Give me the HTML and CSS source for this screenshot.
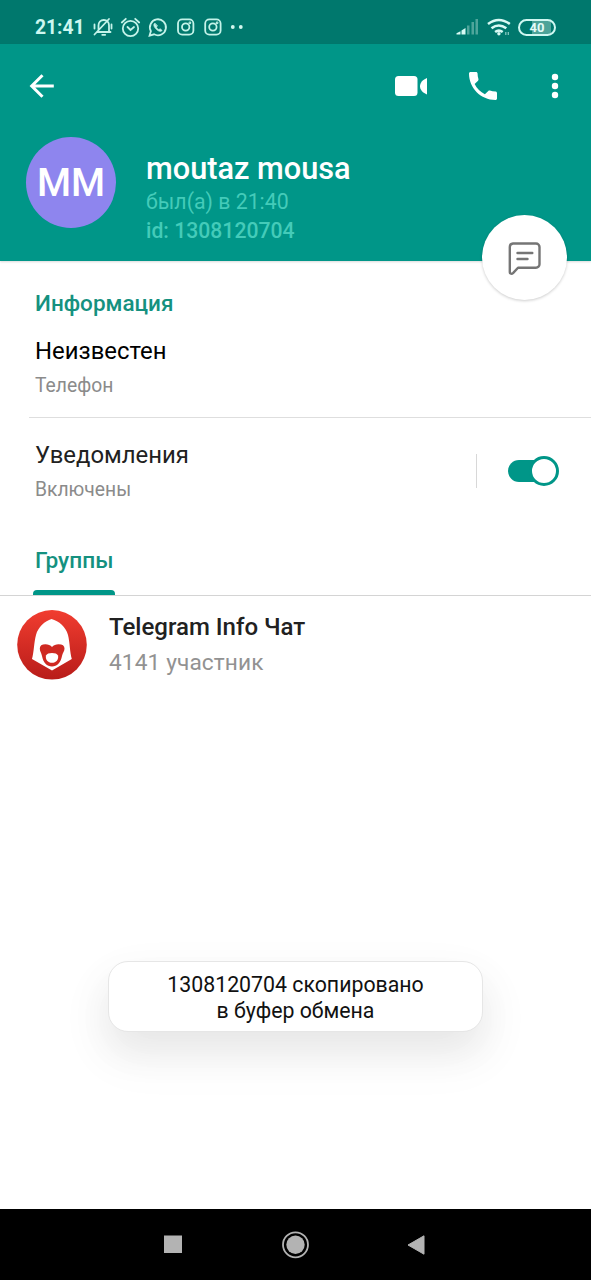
FILE: index.html
```html
<!DOCTYPE html>
<html lang="ru">
<head>
<meta charset="utf-8">
<title>moutaz mousa</title>
<link rel="stylesheet" href="styles.css">
</head>
<body>
<div class="screen">
  <div class="statusbar">
    <span class="clock">21:41</span>
    <svg class="status-icons" width="152" height="24" viewBox="92 15 152 24" fill="none" stroke="#c4f3e9" stroke-width="1.8" stroke-linecap="round">
      <path d="M97 32h13.500M98.500 31.500v-6c0-3 2-5.500 5.300-5.500s5.200 2.500 5.200 5.500v6M102.200 34.800h3M94.500 24.500v4M111.500 24.500v4M94.500 34.500l14.500-15.500"/>
      <circle cx="130.500" cy="28.500" r="7.700"/><path d="M127.500 27l3 3 3.500-3M121.800 22.500l4-3.700M139.200 22.500l-4-3.700"/>
      <path d="M149.600 35.600l1.300-4.500a8 8 0 1 1 3.200 3.200z"/>
      <path d="M154.600 23.300c-1.500 1.200-.8 3.400 1.600 5.800s4.700 3 5.900 1.300l-2-1.600-1.200.9c-1.200-.5-2-1.300-2.500-2.500l.8-1.200z" fill="#c4f3e9" stroke-width="0.800"/>
      <rect x="178" y="19.300" width="15.400" height="15.400" rx="4.200"/><circle cx="185.700" cy="27" r="3.700"/><circle cx="189.900" cy="22.800" r=".5"/>
      <rect x="205.200" y="19.300" width="15.400" height="15.400" rx="4.200"/><circle cx="212.900" cy="27" r="3.700"/><circle cx="217.100" cy="22.800" r=".5"/>
      <g fill="#d3f7ef" stroke="none"><circle cx="232.800" cy="27" r="1.900"/><circle cx="240.800" cy="27" r="1.900"/></g>
    </svg>
    <svg class="signal-icons" width="56" height="22" viewBox="454.500 16 56 22">
      <g fill="#d8faf4"><path d="M456 34.500v-1.200l4-2v3.200zM461 34.500v-4l4-2.500v6.500z"/></g>
      <g fill="#4fa59b"><rect x="466.500" y="25.500" width="2.500" height="9"/><rect x="471" y="22" width="2.500" height="12.500"/><rect x="475" y="19" width="2.500" height="15.500"/></g>
      <g fill="none" stroke="#d8faf4" stroke-width="2.600"><path d="M487.500 24q10.800-8 21.800 0M491 28.300q7.300-5.600 14.800 0M494.600 32q3.700-2.800 7.600 0"/></g>
      <circle cx="498.400" cy="33.700" r="1.700" fill="#d8faf4"/><path d="M505.300 32v3M507.800 32v3" stroke="#8accc2" stroke-width="1.200"/>
    </svg>
    <span class="battery"><span class="battery-value">40</span></span>
  </div>

  <header class="header">
    <div class="toolbar">
      <svg class="back" width="26" height="26" viewBox="0 0 26 26" fill="none" stroke="#fff" stroke-width="3"><path d="M25.800 13H3.500M14.500 2.200L3.700 13l10.800 10.800"/></svg>
      <svg class="video" width="34" height="22" viewBox="0 0 34 22" fill="#fff"><rect x="1" y="1" width="22.500" height="20" rx="3.500"/><path d="M33 3v16.500c-4-1.500-7-4.500-7-8.200S29 4.500 33 3z"/></svg>
      <svg class="phone" width="28" height="28" viewBox="3 3 18 18" fill="#fff"><path d="M6.620 10.790c1.440 2.830 3.760 5.140 6.590 6.590l2.200-2.200c.27-.27.670-.36 1.020-.24 1.120.37 2.330.57 3.570.57.550 0 1 .45 1 1V20c0 .55-.45 1-1 1-9.390 0-17-7.610-17-17 0-.55.450-1 1-1h3.500c.55 0 1 .45 1 1 0 1.250.2 2.450.57 3.570.11.350.03.740-.25 1.020l-2.200 2.200z"/></svg>
      <svg class="more" width="8" height="26" viewBox="0 0 8 26" fill="#fff"><circle cx="4" cy="4" r="3.200"/><circle cx="4" cy="13" r="3.200"/><circle cx="4" cy="22" r="3.200"/></svg>
    </div>
    <div class="profile">
      <div class="avatar">MM</div>
      <div class="profile-text">
        <div class="name">moutaz mousa</div>
        <div class="seen">был(а) в 21:40</div>
        <div class="user-id">id: 1308120704</div>
      </div>
    </div>
    <div class="fab">
      <svg width="34" height="34" viewBox="0 0 34 34" fill="none" stroke="#757575" stroke-width="2.400" stroke-linejoin="round" stroke-linecap="round"><path d="M5 2.500h23a3.500 3.500 0 0 1 3.500 3.500v17.200a3.500 3.500 0 0 1-3.500 3.500H10l-5 5.400c-1.200 1.100-3.200.8-3.200-.9V6A3.500 3.500 0 0 1 5 2.500z"/><path d="M9.500 12h14.800M9.500 18h10"/></svg>
    </div>
  </header>

  <main class="content">
    <section class="info">
      <h2 class="section-title">Информация</h2>
      <div class="value phone-value">Неизвестен</div>
      <div class="label phone-label">Телефон</div>
    </section>
    <section class="notifications">
      <div>
        <div class="value notify-value">Уведомления</div>
        <div class="label notify-label">Включены</div>
      </div>
      <div class="switch-area"><span class="switch"><span class="thumb"></span></span></div>
    </section>
    <nav class="tabs"><span class="tab">Группы</span></nav>
    <div class="chat">
      <svg class="chat-avatar" width="70" height="70" viewBox="0 0 70 70">
        <defs><linearGradient id="red" x1="0" y1="0" x2="0" y2="1"><stop offset="0" stop-color="#f13d30"/><stop offset="1" stop-color="#b81c19"/></linearGradient></defs>
        <circle cx="35" cy="34.800" r="34.800" fill="url(#red)"/>
        <path d="M34.500 9C42 11 49 17 51 25c1.800 7 1.800 17 3.800 24L35 60.500 15 49c2-7 2-17 4-24C21 17 28 11 34.500 9z" fill="#fff"/>
        <path d="M35 37c1.500-1.800 4-2.700 6.500-2.700 4 0 6 1.500 6 4.200 0 3-1.800 4-2.500 7.500-1.200 6.500-5 10.500-10 10.500S26.200 52.500 25 46c-.7-3.500-2.200-4.500-2.200-7.500 0-2.700 2-4.200 5.700-4.200 2.500 0 5 .9 6.500 2.700z" fill="#cf2922"/>
        <path d="M29 45.500c1.200-3.300 10.800-3.300 12 0 1 4-2 7.300-6 7.300s-7-3.300-6-7.300z" fill="#fff"/>
      </svg>
      <div>
        <div class="chat-title">Telegram Info Чат</div>
        <div class="chat-members">4141 участник</div>
      </div>
    </div>
  </main>

  <div class="toast"><span class="toast-first">1308120704 скопировано</span><span class="toast-second">в буфер обмена</span></div>

  <footer class="navbar">
    <svg width="20" height="20" viewBox="0 0 20 20"><rect x="1" y=".5" width="18" height="17.500" fill="#b3b3b3"/></svg>
    <svg width="28" height="28" viewBox="0 0 28 28"><circle cx="14.500" cy="13.800" r="12.500" fill="none" stroke="#b3b3b3" stroke-width="1.800"/><circle cx="14.500" cy="13.800" r="9.200" fill="#b3b3b3"/></svg>
    <svg width="20" height="22" viewBox="0 0 20 22"><path d="M2 11L18 1.800v18.400z" fill="#b3b3b3" stroke="#b3b3b3" stroke-linejoin="round"/></svg>
  </footer>
</div>
</body>
</html>
```
FILE: styles.css
```css
* { box-sizing: border-box; }
body { margin: 0; background: #fff; font-family: Roboto, "Noto Sans", sans-serif; }
svg { display: block; flex: none; }
.screen { position: relative; width: 591px; height: 1280px; display: flex; flex-direction: column; overflow: hidden; white-space: nowrap; }

.statusbar { height: 44px; flex: none; display: flex; align-items: center; padding: 10px 35px 0 35px; background: #00786d; }
.clock { width: 57px; padding-top: 1px; font-size: 19.300px; line-height: 24px; font-weight: 700; color: #cdf7f0; }
.signal-icons { margin-left: auto; }
.battery { display: flex; align-items: center; justify-content: center; width: 38px; height: 17px; margin-left: 7px; border: 2px solid #cff7f1; border-radius: 9px; background: linear-gradient(90deg, transparent 12px, #4da399 12px, #4da399 31px, transparent 31px); }
.battery-value { font-size: 13px; font-weight: 700; color: #e4fbf8; }

.header { position: relative; z-index: 1; height: 217px; flex: none; background: #009688; box-shadow: 0 1px 2px rgba(0, 0, 0, .15); }
.toolbar { display: flex; align-items: center; height: 84px; padding: 0 32px 0 28px; }
.video { margin-left: auto; }
.phone { margin-left: 41px; }
.more { margin-left: 54px; }
.profile { display: flex; padding: 9px 0 0 26px; gap: 30px; }
.avatar { width: 90px; height: 91px; border-radius: 50%; background: #8e85ee; color: #fff; font-size: 39px; line-height: 92px; font-weight: 500; text-align: center; }
.profile-text { padding-top: 12px; }
.name { font-size: 30.700px; line-height: 39px; font-weight: 500; color: #fff; }
.seen { font-size: 21.300px; line-height: 28px; color: #44cbb9; }
.user-id { font-size: 21.200px; line-height: 29px; font-weight: 500; color: #44cbb9; }
.fab { position: absolute; right: 24px; bottom: -39px; width: 85px; height: 85px; border-radius: 50%; background: #fff; display: flex; align-items: center; justify-content: center; box-shadow: 0 1px 3px rgba(0, 0, 0, .2); }

.content { flex: 1; }
.info { height: 157px; margin-left: 29px; padding: 28px 0 0 6px; border-bottom: 1px solid #dedede; }
.section-title { margin: 0; font-size: 22.500px; line-height: 28px; font-weight: 500; color: #15917f; }
.value { font-size: 23.900px; line-height: 32px; }
.label { font-size: 19.300px; line-height: 26px; color: #8b8b8b; }
.phone-value { margin-top: 18px; color: #000; }
.phone-label { margin-top: 6px; }
.notifications { display: flex; justify-content: space-between; height: 106px; padding: 21px 32px 0 35px; }
.notify-value { color: #212121; }
.notify-label { margin-top: 6px; }
.switch-area { display: flex; align-items: center; width: 83px; height: 34px; margin-top: 15px; padding-left: 31px; border-left: 1px solid #d8d8d8; }
.switch { display: flex; align-items: center; justify-content: flex-end; width: 52px; height: 22px; background: linear-gradient(#009688, #009688) 0 0 / 40px 22px no-repeat; border-radius: 11px 0 0 11px; }
.thumb { width: 30px; height: 30px; flex: none; border: 3px solid #009688; border-radius: 50%; background: #fff; }
.tabs { display: flex; align-items: flex-end; height: 72px; padding-left: 33px; border-bottom: 1px solid #d4d4d4; }
.tab { width: 82px; height: 49px; padding-left: 2px; font-size: 22.700px; line-height: 30px; font-weight: 500; color: #15917f; }
.tab::after { content: ""; display: block; height: 5px; margin: 14px 0 0 -2px; border-radius: 4px 4px 0 0; background: #009688; }
.chat { display: flex; gap: 22px; padding: 14px 0 0 17px; }
.chat-title { font-size: 24px; line-height: 34px; font-weight: 500; color: #212121; }
.chat-members { font-size: 22.700px; line-height: 37px; letter-spacing: .1px; color: #929292; }

.toast { position: absolute; left: 108px; top: 961px; width: 375px; height: 71px; display: flex; flex-direction: column; align-items: center; padding-top: 10px; border: 1px solid #e6e6e6; border-radius: 20px; background: #fff; box-shadow: 0 20px 38px rgba(0, 0, 0, .08), 0 22px 56px 14px rgba(0, 0, 0, .025); font-size: 21.300px; line-height: 25.500px; color: #111; }
.navbar { height: 71px; flex: none; display: flex; align-items: center; justify-content: space-between; padding: 0 165px 0 163px; background: #000; }
```
